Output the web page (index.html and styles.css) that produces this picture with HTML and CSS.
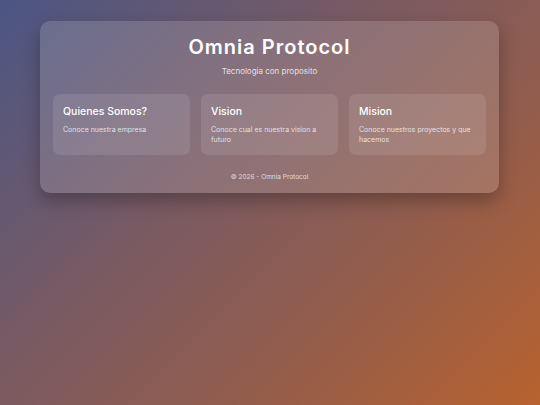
FILE: index.html
```html
<!DOCTYPE html>
<html lang="es">
<head>
<meta charset="utf-8">
<title>Omnia Protocol</title>
<link rel="stylesheet" href="styles.css">
</head>
<body>
<main class="container">
  <h1 class="title">Omnia Protocol</h1>
  <p class="subtitle">Tecnologia con proposito</p>
  <section class="cards">
    <article class="card">
      <h3 class="card-title">Quienes Somos?</h3>
      <p class="card-text">Conoce nuestra empresa</p>
    </article>
    <article class="card">
      <h3 class="card-title">Vision</h3>
      <p class="card-text">Conoce cual es nuestra vision a futuro</p>
    </article>
    <article class="card">
      <h3 class="card-title">Mision</h3>
      <p class="card-text">Conoce nuestros proyectos y que hacemos</p>
    </article>
  </section>
  <footer class="footer">© 2026 - Omnia Protocol</footer>
</main>
</body>
</html>
```
FILE: styles.css
```css
html, body {
  margin: 0;
  padding: 0;
}
body {
  min-height: 405px;
  background: linear-gradient(135deg, #4b5684 0%, #7a5a62 40%, #955d4a 70%, #b8622e 100%);
  font-family: "Inter", "Open Sans", sans-serif;
  color: #fff;
  overflow: hidden;
}
.container {
  box-sizing: border-box;
  width: 459px;
  margin: 21px 0 0 40px;
  padding: 12px 13px 11px;
  border-radius: 10px;
  background: rgba(255, 255, 255, 0.14);
  box-shadow: 0 8px 18px rgba(0, 0, 0, 0.28);
  text-align: center;
}
.title {
  margin: 0;
  font-size: 20px;
  line-height: 28px;
  font-weight: 600;
  letter-spacing: 1px;
}
.subtitle {
  margin: 4px 0 0;
  font-size: 8px;
  line-height: 12px;
  color: rgba(255, 255, 255, 0.8);
}
.cards {
  margin-top: 17px;
  display: grid;
  grid-template-columns: repeat(3, 1fr);
  gap: 11px;
  text-align: left;
}
.card {
  padding: 10px 10px 10px;
  border-radius: 7px;
  background: rgba(255, 255, 255, 0.1);
}
.card-title {
  margin: 0 0 5px;
  font-size: 10.5px;
  line-height: 16px;
  font-weight: 500;
}
.card-text {
  margin: 0;
  font-size: 7px;
  line-height: 10px;
  color: rgba(255, 255, 255, 0.78);
}
.footer {
  margin-top: 17px;
  font-size: 6.5px;
  line-height: 10px;
  color: rgba(255, 255, 255, 0.75);
}
```
